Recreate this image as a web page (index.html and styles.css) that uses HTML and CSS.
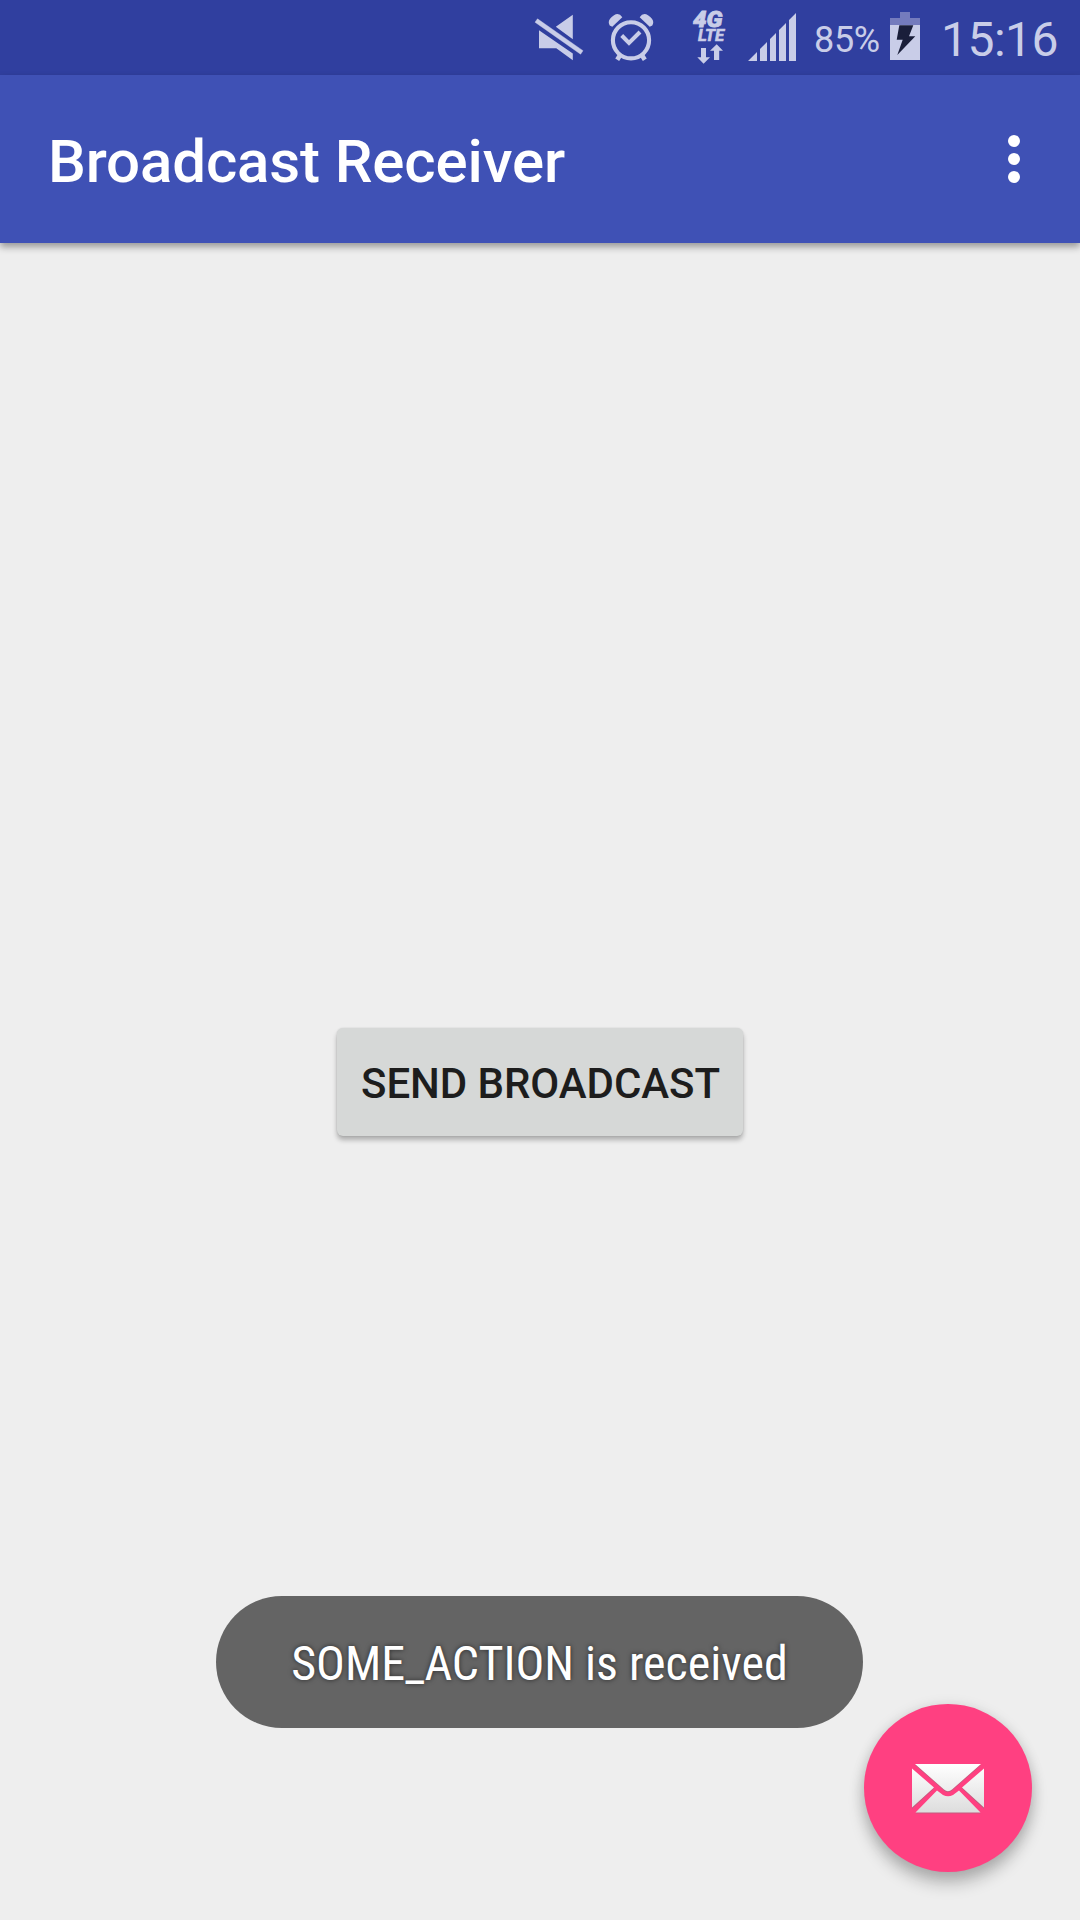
FILE: index.html
```html
<!DOCTYPE html>
<html lang="en">
<head>
<meta charset="utf-8">
<title>Broadcast Receiver</title>
<link rel="stylesheet" href="styles.css">
</head>
<body>
<div class="screen">
  <div class="status-bar">
    <svg class="icon-mute" viewBox="534 0 50 75" width="50" height="75" fill="currentColor">
      <path d="M537.5 18.800L583 50.700L580.600 54.200L535 22.200Z" stroke="currentColor" stroke-width=".4"/>
      <path d="M572.800 14.700V39.200L555.800 26.800Z M539 30.300L572.800 53.500V60.200L556.300 48.200H539Z"/>
    </svg>
    <svg class="icon-alarm" viewBox="608 0 46 75" width="46" height="75" fill="none" stroke="currentColor">
      <circle cx="631" cy="40.3" r="18.100" stroke-width="4.100"/>
      <path d="M621.700 35.500L629 43L640 32" stroke-width="4"/>
      <path d="M620.500 54.500L617.200 59.800M641.500 54.500L644.800 59.800" stroke-width="4.600"/>
      <path d="M612.300 26.700L622.300 17.200Q619 12.300 614 15.200Q606.500 20 609.700 25.500ZM649.700 26.700L639.700 17.200Q643 12.300 648 15.200Q655.500 20 652.300 25.500Z" fill="currentColor" stroke="none"/>
    </svg>
    <svg class="icon-lte" viewBox="692 0 34 75" width="34" height="75" fill="currentColor">
      <text class="net-gen" x="693" y="27.300" textLength="29.500" lengthAdjust="spacingAndGlyphs">4G</text>
      <text class="net-type" x="698" y="41" textLength="26" lengthAdjust="spacingAndGlyphs">LTE</text>
      <path d="M701 48H706V57.300H710L703.600 63.800L697.300 57.300H701Z M714 60V50.700H710L716.700 44.300L723 50.700H719.200V60Z"/>
    </svg>
    <svg class="icon-signal" viewBox="748 0 48 75" width="48" height="75" fill="currentColor">
      <path d="M748 61L757 52V61Z M760 61V49L767 42V61Z M770 61V39L776 33V61Z M779 61V30L786 23V61Z M789 61V20L796 13V61Z"/>
    </svg>
    <span class="battery-level">85%</span>
    <svg class="icon-battery" viewBox="890 0 30 75" width="30" height="75">
      <path d="M900 12H910V18H920V25H890V18H900Z" fill="#747bbd"/>
      <path d="M890 25H920V60H890Z" fill="currentColor"/>
      <path d="M899.300 25.300H913.300L909 36.200H915.300L897.300 55L902.700 39.700H896.700Z" fill="#1a1e3a"/>
    </svg>
    <span class="clock">15:16</span>
  </div>
  <header class="app-bar">
    <h1 class="title">Broadcast Receiver</h1>
    <div class="overflow"><i class="dot"></i><i class="dot"></i><i class="dot"></i></div>
  </header>
  <main class="content">
    <button class="send-button">SEND BROADCAST</button>
  </main>
  <div class="toast"><span class="toast-text">SOME_ACTION is received</span></div>
  <div class="fab">
    <svg viewBox="0 0 72 50" width="72" height="50">
      <defs>
        <linearGradient id="paper" x1="0" y1="0" x2="0" y2="50" gradientUnits="userSpaceOnUse">
          <stop offset="0" stop-color="#fff"/><stop offset="1" stop-color="#dcdcdc"/>
        </linearGradient>
      </defs>
      <g fill="#a36a7c" opacity=".65" transform="translate(0 1)">
        <path d="M3 0H69L40 25.500Q36 29 32 25.500ZM0 4.500L22 23.500L0 44ZM72 4.500L50 23.500L72 44ZM25 26.500L31 31Q36 33.500 41 31L47 26.500L68.500 48.500H3.500Z"/>
      </g>
      <path fill="url(#paper)" d="M3 0H69L40 25.500Q36 29 32 25.500ZM0 4.500L22 23.500L0 43.500ZM72 4.500L50 23.500L72 43.500ZM25 26.500L31 31Q36 33.500 41 31L47 26.500L68.500 48.500H3.500Z"/>
    </svg>
  </div>
</div>
</body>
</html>
```
FILE: styles.css
```css
* { box-sizing: border-box; }
body { margin: 0; font-family: Roboto, "Liberation Sans", sans-serif; }
.screen {
  position: relative;
  display: flex;
  flex-direction: column;
  width: 1080px;
  height: 1920px;
  overflow: hidden;
  background: #eee;
}
.status-bar {
  display: flex;
  justify-content: flex-start;
  height: 75px;
  padding-left: 534px;
  background: #303f9f;
  color: #c9cde8;
  white-space: nowrap;
}
.status-bar svg { flex: none; display: block; }
.icon-alarm { margin-left: 24px; }
.icon-lte { margin-left: 38px; }
.icon-signal { margin-left: 22px; }
.net-gen { font: italic 900 22px Roboto, sans-serif; stroke: currentColor; stroke-width: .8px; }
.net-type { font: italic 700 16px Roboto, sans-serif; stroke: currentColor; stroke-width: .6px; }
.battery-level {
  width: 76px;
  margin-left: 18px;
  font-size: 36px;
  letter-spacing: -.3px;
  line-height: 81px;
}
.clock {
  margin-left: 21px;
  font-size: 48px;
  font-weight: 400;
  letter-spacing: -.5px;
  line-height: 80px;
}
.app-bar {
  display: flex;
  justify-content: space-between;
  align-items: flex-start;
  height: 168px;
  padding-left: 48px;
  background: #3f51b5;
  color: #fff;
  box-shadow: 0 4px 7px rgba(0, 0, 0, .36);
}
.title { margin: 0; font-size: 60px; font-weight: 500; letter-spacing: -.13px; line-height: 174px; }
.overflow {
  display: flex;
  flex-direction: column;
  gap: 6px;
  margin: 60px 60px 0 0;
}
.dot { width: 12px; height: 12px; border-radius: 50%; background: #fff; }
.content { flex: 1; display: flex; justify-content: center; align-items: flex-start; }
.send-button {
  width: 406px;
  height: 108px;
  margin: 785px 0 0;
  padding: 4px 0 0 1px;
  border: 0;
  border-radius: 6px;
  background: #d6d8d7;
  color: #1d1d1d;
  font: 500 42px/104px Roboto, sans-serif;
  letter-spacing: -.07px;
  white-space: nowrap;
  box-shadow: 0 4px 5px rgba(0, 0, 0, .27), 0 0 2px rgba(0, 0, 0, .12);
}
.toast {
  position: absolute;
  left: 216px;
  top: 1596px;
  display: flex;
  justify-content: center;
  width: 647px;
  height: 132px;
  border-radius: 66px;
  background: #646464;
}
.toast-text {
  color: #fff;
  font: 400 48px/136px "Roboto Condensed", Roboto, sans-serif;
  font-stretch: condensed;
  white-space: nowrap;
  text-shadow: 0 0 5px rgba(0, 0, 0, .6);
}
.fab {
  position: absolute;
  left: 864px;
  top: 1704px;
  display: flex;
  justify-content: center;
  width: 168px;
  height: 168px;
  padding-top: 60px;
  border-radius: 50%;
  background: #ff4081;
  box-shadow: 0 12px 16px rgba(0, 0, 0, .22), 0 2px 14px rgba(0, 0, 0, .13);
}
```
